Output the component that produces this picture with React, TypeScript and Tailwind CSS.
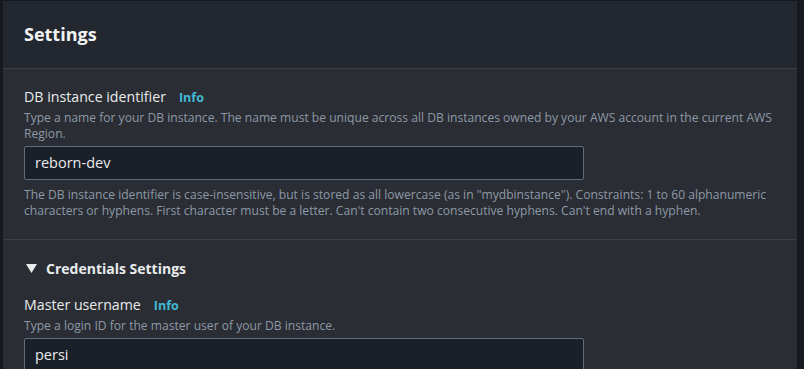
import React from 'react';

const font = { fontFamily: '"Open Sans", "Noto Sans", sans-serif' };

const Info = () => (
  <span className="ml-[13px] text-[12.5px] font-bold text-[#44b9d6]">Info</span>
);

interface FieldProps {
  label: string;
  hint: string;
  value: string;
  children?: React.ReactNode;
}

const Field: React.FC<FieldProps> = ({ label, hint, value, children }) => (
  <div className="flex flex-col">
    <div className="flex items-baseline leading-[20px]">
      <span className="text-[14.2px] text-[#e9ebed]">{label}</span>
      <Info />
    </div>
    <p className="mt-[2px] text-[12.1px] leading-[16px] text-[#8d99a8]">{hint}</p>
    <div className="mt-[4px] flex h-[34px] w-[560px] items-center rounded-[2px] border border-[#5f6b7a] bg-[#1a1f28] px-[10px] text-[14.5px] text-[#e9ebed]">
      {value}
    </div>
    {children}
  </div>
);

export default function App() {
  return (
    <div className="h-screen w-full overflow-hidden bg-[#16191f] pl-[3px] pr-[7px] pt-[1px]" style={font}>
      <div className="flex flex-col">
        <div className="flex h-[67px] items-center bg-[#232730] px-[21px]">
          <h2 className="text-[18px] font-bold text-[#f2f3f3]">Settings</h2>
        </div>
        <div className="h-px bg-[#3a3f47]" />
        <div className="bg-[#2a2d33] px-[21px] pt-[18px] pb-[20px]">
          <Field
            label="DB instance identifier"
            hint="Type a name for your DB instance. The name must be unique across all DB instances owned by your AWS account in the current AWS Region."
            value="reborn-dev"
          >
            <p className="mt-[7px] text-[12.1px] leading-[16px] text-[#8d99a8]">
              The DB instance identifier is case-insensitive, but is stored as all lowercase (as in "mydbinstance"). Constraints: 1 to 60 alphanumeric characters or hyphens. First character must be a letter. Can't contain two consecutive hyphens. Can't end with a hyphen.
            </p>
          </Field>
        </div>
        <div className="h-px bg-[#3a3f47]" />
        <div className="bg-[#2a2d33] px-[21px] pt-[18px] pb-[40px]">
          <div className="flex items-center gap-[9px]">
            <svg width="11" height="9" viewBox="0 0 11 9" className="ml-[2px]">
              <polygon points="0,0 11,0 5.5,9" fill="#e9ebed" />
            </svg>
            <span className="text-[14px] font-bold text-[#e9ebed]">Credentials Settings</span>
          </div>
          <div className="mt-[16px]">
            <Field
              label="Master username"
              hint="Type a login ID for the master user of your DB instance."
              value="persi"
            />
          </div>
        </div>
      </div>
    </div>
  );
}
